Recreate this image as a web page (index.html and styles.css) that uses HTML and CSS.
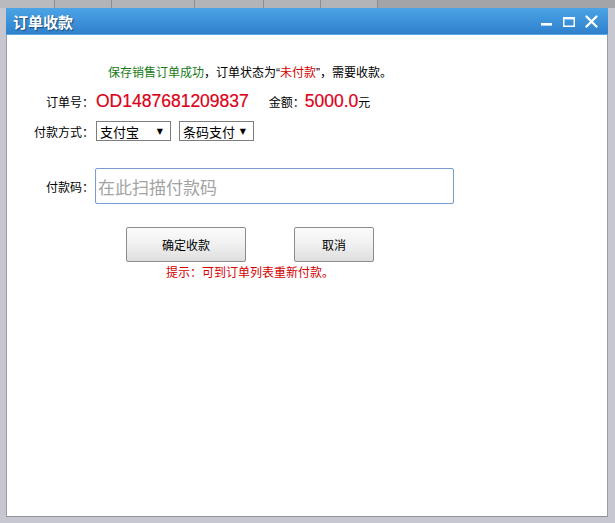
FILE: index.html
```html
<!DOCTYPE html>
<html lang="zh-CN">
<head>
<meta charset="utf-8">
<title>订单收款</title>
<link rel="stylesheet" href="styles.css">
</head>
<body>
<div class="page">
  <div class="topstrip">
    <span class="cell c1"></span><span class="cell c2"></span><span class="cell c3"></span><span class="cell c4"></span><span class="cell c5"></span><span class="cell c6"></span><span class="cell c7"></span>
  </div>
  <div class="dialog">
    <div class="titlebar">
      <span class="title">订单收款</span>
      <svg class="controls" width="57" height="27" viewBox="0 0 57 27">
        <rect x="0" y="15" width="11" height="2.6" fill="#fff"/>
        <rect x="22.75" y="9.75" width="10.5" height="8.5" fill="none" stroke="#fff" stroke-width="1.5"/>
        <rect x="22" y="9" width="12" height="2.4" fill="#fff"/>
        <path d="M45.5 8.5 L55.5 18.5 M55.5 8.5 L45.5 18.5" stroke="#fff" stroke-width="2.3" stroke-linecap="round"/>
      </svg>
    </div>
    <div class="body">
      <div class="content">
        <p class="msg"><span class="ok">保存销售订单成功</span>，订单状态为<span class="q">“</span><span class="warn">未付款</span><span class="q">”</span>，需要收款。</p>
        <div class="row row-order">
          <span class="label">订单号：</span>
          <span class="big">OD1487681209837</span>
          <span class="label2">金额：</span>
          <span class="big">5000.0</span><span class="unit">元</span>
        </div>
        <div class="row row-pay">
          <span class="label">付款方式：</span>
          <div class="select sel1"><span>支付宝</span><span class="arrow">▼</span></div>
          <div class="select sel2"><span>条码支付</span><span class="arrow">▼</span></div>
        </div>
        <div class="row row-code">
          <span class="label">付款码：</span>
          <input class="code-input" type="text" placeholder="在此扫描付款码">
        </div>
        <div class="actions">
          <div class="buttons">
            <button class="btn btn-ok" type="button">确定收款</button>
            <button class="btn btn-cancel" type="button">取消</button>
          </div>
          <p class="hint">提示：可到订单列表重新付款。</p>
        </div>
      </div>
    </div>
  </div>
</div>
</body>
</html>
```
FILE: styles.css
```css
* { box-sizing: border-box; }
html, body {
  margin: 0;
  padding: 0;
  width: 615px;
  height: 523px;
  overflow: hidden;
  background: #c6c7cf;
  font-family: "Noto Sans CJK SC", "Liberation Sans", sans-serif;
  font-size: 12px;
  color: #000;
}
.page { width: 615px; height: 523px; }

.topstrip {
  height: 8px;
  display: flex;
  background: #a6a7ab;
}
.cell { height: 8px; border-right: 1px solid #8c8d92; }
.c1 { width: 55px; background: #b9babe; }
.c2 { width: 57px; background: #b3b4b8; }
.c3 { width: 83px; background: #b3b4b8; }
.c4 { width: 69px; background: #b3b4b8; }
.c5 { width: 57px; background: #b3b4b8; }
.c6 { width: 57px; background: #b3b4b8; }
.c7 { flex: 1; border-right: none; background: #a3a4a8; }

.dialog {
  margin-left: 6px;
  width: 602px;
  height: 509px;
  display: flex;
  flex-direction: column;
}
.titlebar {
  height: 27px;
  display: flex;
  align-items: center;
  background: linear-gradient(#4ba4e6, #3a8fd7 60%, #2f80cb);
  border-bottom: 1px solid #5aa6e6;
  padding-right: 10px;
}
.title {
  padding-left: 7px;
  color: #fff;
  font-weight: bold;
  font-size: 15px;
  line-height: 27px;
  text-shadow: 1px 1px 1px #1d4a78;
}
.controls { margin-left: auto; display: block; }

.body {
  flex: 1;
  background: #fff;
  border-left: 1px solid #9a9ca4;
  border-right: 1px solid #9a9ca4;
  border-bottom: 1px solid #8e9098;
}
.content {
  width: 486px;
  padding-top: 29px;
}
.msg {
  margin: 0;
  height: 16px;
  line-height: 16px;
  text-align: center;
  font-size: 12px;
}
.q { font-family: "Liberation Sans", sans-serif; }
.ok { color: #167a16; }
.warn { color: #d40000; }

.row {
  display: flex;
  align-items: center;
}
.label {
  width: 87px;
  text-align: right;
  font-size: 12px;
}
.row-order {
  margin-top: 9px;
  height: 24px;
}
.big {
  font-family: "Liberation Sans", Arial, sans-serif;
  font-size: 17.5px;
  color: #dc0018;
  -webkit-text-stroke: 0.2px #dc0018;
}
.row-order .label + .big { margin-left: 2px; }
.label2 { margin-left: 20px; font-size: 12px; }
.unit { font-size: 12px; }

.row-pay {
  margin-top: 8px;
  height: 20px;
}
.select {
  height: 20px;
  width: 75px;
  border: 1px solid #7d7d7d;
  display: flex;
  align-items: center;
  justify-content: space-between;
  padding: 0 7px 0 3px;
  font-size: 13px;
  background: #fff;
}
.sel1 { margin-left: 2px; }
.sel2 { margin-left: 8px; }
.arrow { font-size: 8px; font-family: "DejaVu Sans", sans-serif; }

.row-code {
  margin-top: 27px;
  height: 36px;
}
.code-input {
  margin: 0 0 0 1px;
  width: 359px;
  height: 36px;
  border: 1px solid #7a9cd0;
  border-radius: 2px;
  box-shadow: inset 0 0 1px #c6d6ee;
  padding: 0 0 0 2px;
  font-family: "Noto Sans CJK SC", sans-serif;
  font-size: 17px;
  outline: none;
}
.code-input::placeholder { color: #a3a3a3; }

.actions {
  margin-top: 23px;
  margin-left: 119px;
  width: 248px;
}
.buttons {
  display: flex;
  justify-content: space-between;
}
.btn {
  height: 35px;
  border: 1px solid #8c8c8c;
  border-radius: 2px;
  background: linear-gradient(#fbfbfb, #f0f0f0 50%, #dedede);
  font-family: "Noto Sans CJK SC", sans-serif;
  font-size: 12px;
  color: #000;
  padding: 0;
}
.btn-ok { width: 120px; }
.btn-cancel { width: 80px; }
.hint {
  margin: 2px 0 0;
  line-height: 16px;
  text-align: center;
  color: #d40000;
  font-size: 12px;
}
```
